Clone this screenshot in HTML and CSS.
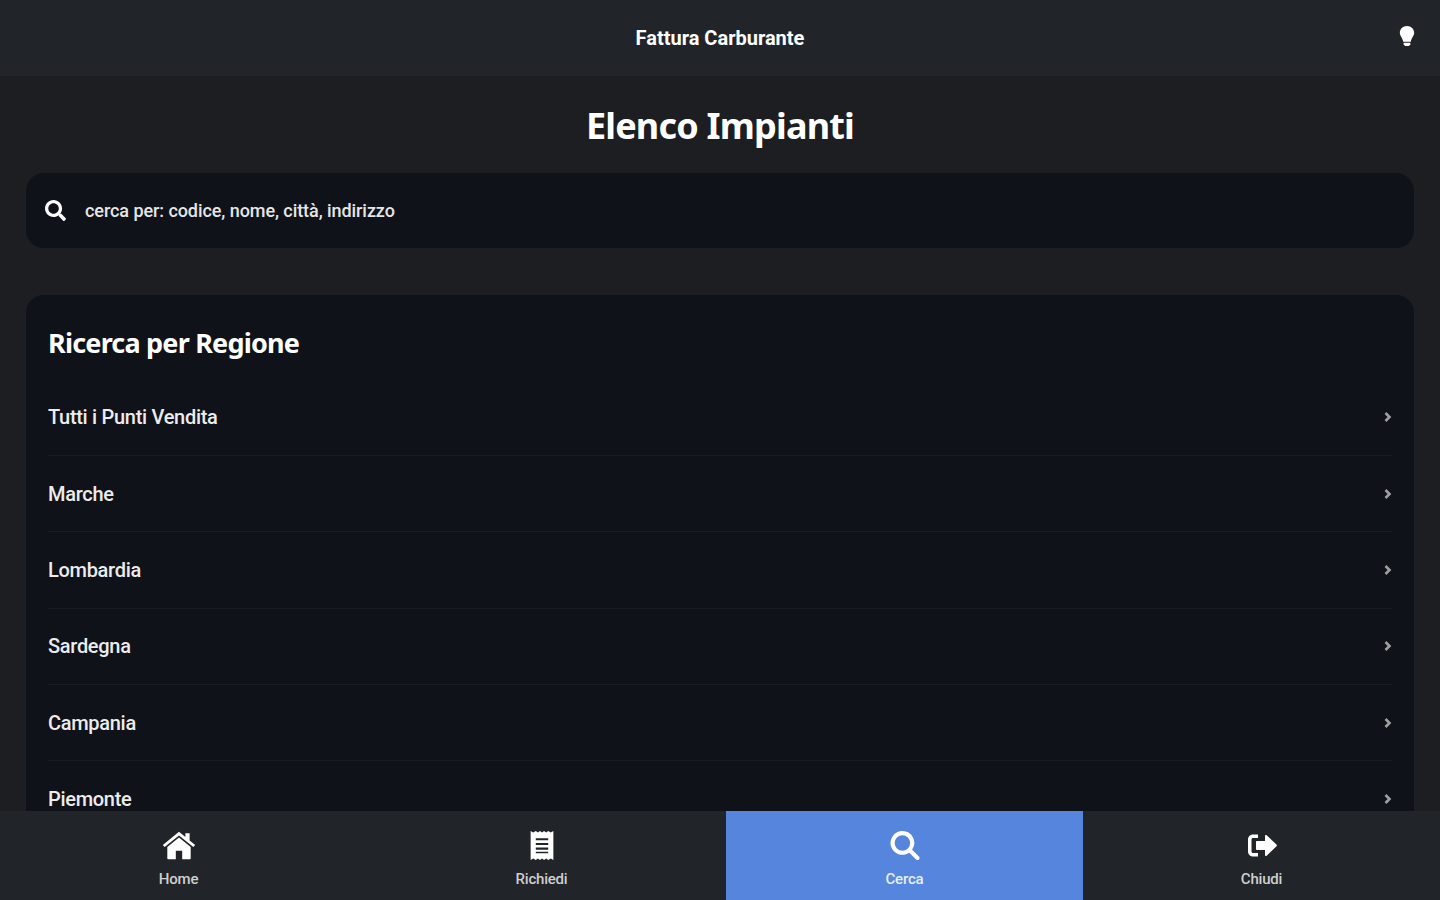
FILE: index.html
```html
<!DOCTYPE html>
<html lang="it">
<head>
    <meta charset="UTF-8">
    <meta name="viewport" content="width=device-width, initial-scale=1.0">
    <title>Fattura Carburante</title>
    <link rel="stylesheet" href="styles.css">
</head>
<body>
    <header class="topbar">
        <span class="topbar-title">Fattura Carburante</span>
        <svg class="bulb" viewBox="0 0 16 22" aria-hidden="true">
            <path d="M8 0C3.600 0 .5 3.200.5 7.200c0 3.700 3 5.300 3.500 9.300h8c.5-4 3.500-5.600 3.500-9.300C15.500 3.200 12.400 0 8 0z"/>
            <path d="M4.500 17.500h7v1.500l-1.500 2H6l-1.500-2z"/>
        </svg>
    </header>

    <main class="content">
        <h1 class="page-title">Elenco Impianti</h1>

        <div class="search-box">
            <svg class="search-icon" viewBox="0 0 512 512" aria-hidden="true">
                <path d="M505 442.700L405.300 343c-4.500-4.500-10.600-7-17-7H372c27.600-35.300 44-79.700 44-128C416 93.100 322.900 0 208 0S0 93.100 0 208s93.100 208 208 208c48.300 0 92.700-16.400 128-44v16.300c0 6.400 2.500 12.500 7 17l99.700 99.700c9.400 9.400 24.600 9.400 33.900 0l28.300-28.300c9.400-9.400 9.400-24.600.1-34zM208 336c-70.700 0-128-57.200-128-128 0-70.700 57.200-128 128-128 70.700 0 128 57.200 128 128 0 70.700-57.200 128-128 128z"/>
            </svg>
            <span class="search-placeholder">cerca per: codice, nome, città, indirizzo</span>
        </div>

        <section class="region-card">
            <h2 class="region-title">Ricerca per Regione</h2>
            <ul class="region-list">
                <li class="region-item"><span>Tutti i Punti Vendita</span><svg class="chevron" viewBox="0 0 8 12"><path d="M1.500 2 5.500 6l-4 4"/></svg></li>
                <li class="region-item"><span>Marche</span><svg class="chevron" viewBox="0 0 8 12"><path d="M1.500 2 5.500 6l-4 4"/></svg></li>
                <li class="region-item"><span>Lombardia</span><svg class="chevron" viewBox="0 0 8 12"><path d="M1.500 2 5.500 6l-4 4"/></svg></li>
                <li class="region-item"><span>Sardegna</span><svg class="chevron" viewBox="0 0 8 12"><path d="M1.500 2 5.500 6l-4 4"/></svg></li>
                <li class="region-item"><span>Campania</span><svg class="chevron" viewBox="0 0 8 12"><path d="M1.500 2 5.500 6l-4 4"/></svg></li>
                <li class="region-item"><span>Piemonte</span><svg class="chevron" viewBox="0 0 8 12"><path d="M1.500 2 5.500 6l-4 4"/></svg></li>
            </ul>
        </section>
    </main>

    <nav class="tabbar">
        <a class="tab" href="#">
            <svg class="tab-icon" viewBox="0 0 32 28" aria-hidden="true">
                <path d="M16 6.500 5 15.500V26c0 .6.400 1 1 1h7v-8h6v8h7c.6 0 1-.4 1-1V15.500z"/>
                <path d="M16 1 .8 13.500l1.700 2L16 4.500l13.500 11 1.700-2L26 9.200V2.500h-4v3.400z"/>
            </svg>
            <span>Home</span>
        </a>
        <a class="tab" href="#">
            <svg class="tab-icon" viewBox="0 0 24 30" aria-hidden="true">
                <path fill-rule="evenodd" d="M1 1l2.500 1.500L6 1l2 1.500L10 1l2 1.500L14 1l2 1.500L18 1l2.500 1.500L23 1v28l-2.500-1.500L18 29l-2-1.500L14 29l-2-1.500L10 29l-2-1.500L6 29l-2.500-1.500L1 29zM6 8v2h12V8zm0 4.500v2h12v-2zm0 4.500v2h12v-2zm0 4v1.500h12V21z"/>
            </svg>
            <span>Richiedi</span>
        </a>
        <a class="tab tab-active" href="#">
            <svg class="tab-icon" viewBox="0 0 30 30" aria-hidden="true">
                <path fill-rule="evenodd" d="M12.500 1a11.500 11.500 0 1 0 6.600 20.900l6.600 6.600c.8.800 2 .8 2.800 0s.8-2 0-2.800l-6.600-6.600A11.500 11.500 0 0 0 12.500 1zm0 4a7.500 7.500 0 1 1 0 15 7.500 7.500 0 0 1 0-15z"/>
            </svg>
            <span>Cerca</span>
        </a>
        <a class="tab" href="#">
            <svg class="tab-icon" viewBox="-2 -2 34 30" aria-hidden="true">
                <path d="M11 2H6C3.200 2 1 4.200 1 7v12c0 2.800 2.200 5 5 5h5v-3.500H6c-.8 0-1.500-.7-1.500-1.500V7c0-.8.700-1.500 1.500-1.500h5z"/>
                <path d="M18 3.500c0-.9 1-1.300 1.700-.7L29.500 12c.5.500.5 1.300 0 1.800l-9.800 9.400c-.7.600-1.700.2-1.700-.7V17.500H10c-.6 0-1-.4-1-1v-7c0-.6.400-1 1-1h8z"/>
            </svg>
            <span>Chiudi</span>
        </a>
    </nav>
</body>
</html>
```

FILE: styles.css
```css
* {
    box-sizing: border-box;
}

html, body {
    height: 100%;
}

body {
    margin: 0;
    display: flex;
    flex-direction: column;
    overflow: hidden;
    font-family: Roboto, "Liberation Sans", sans-serif;
    background-color: #1c1e22;
    color: #fff;
}

.topbar {
    flex: 0 0 76px;
    display: flex;
    align-items: center;
    justify-content: center;
    position: relative;
    background-color: #212529;
}

.topbar-title {
    font-size: 20px;
    font-weight: 700;
    letter-spacing: 0;
}

.bulb {
    position: absolute;
    top: 26px;
    right: 25px;
    width: 16px;
    height: 21px;
    fill: #fff;
}

.content {
    flex: 1;
    min-height: 0;
    overflow: hidden;
    padding: 0 26px;
}

.page-title {
    margin: 27px 0 25px;
    text-align: center;
    font-family: "Noto Sans", sans-serif;
    font-size: 36px;
    line-height: 45px;
    font-weight: 700;
    letter-spacing: -0.8px;
}

.search-box {
    height: 75px;
    display: flex;
    align-items: center;
    gap: 19px;
    padding-left: 19px;
    border-radius: 18px;
    background-color: #10121a;
}

.search-icon {
    width: 21px;
    height: 21px;
    fill: #fff;
}

.search-placeholder {
    font-size: 18px;
    font-weight: 500;
    letter-spacing: -0.07px;
    color: #e6e6e6;
}

.region-card {
    margin-top: 47px;
    padding: 27px 22px 0;
    border-radius: 18px 18px 0 0;
    background-color: #10121a;
}

.region-title {
    margin: 0 0 15.500px;
    font-family: "Noto Sans", sans-serif;
    font-size: 27px;
    line-height: 42px;
    font-weight: 700;
    letter-spacing: -0.8px;
}

.region-list {
    margin: 0;
    padding: 0;
    list-style: none;
}

.region-item {
    height: 76.4px;
    display: flex;
    align-items: center;
    justify-content: space-between;
    border-bottom: 1px solid #1a1c22;
    font-size: 20px;
    font-weight: 500;
    letter-spacing: -0.3px;
    color: #ececec;
}

.chevron {
    width: 8px;
    height: 12px;
    fill: none;
    stroke: #a0a0a0;
    stroke-width: 2.6;
}

.tabbar {
    flex: 0 0 89px;
    display: grid;
    grid-template-columns: 357px 369px 357px 357px;
    background-color: #212429;
}

.tab {
    display: flex;
    flex-direction: column;
    align-items: center;
    padding-top: 19px;
    font-size: 15px;
    font-weight: 500;
    letter-spacing: -0.2px;
    color: #cfcfcf;
    text-decoration: none;
}

.tab-active {
    background-color: #5585dc;
    color: #e8eefb;
}

.tab-icon {
    width: 34px;
    height: 31px;
    margin-bottom: 9px;
    fill: #fff;
}
```
